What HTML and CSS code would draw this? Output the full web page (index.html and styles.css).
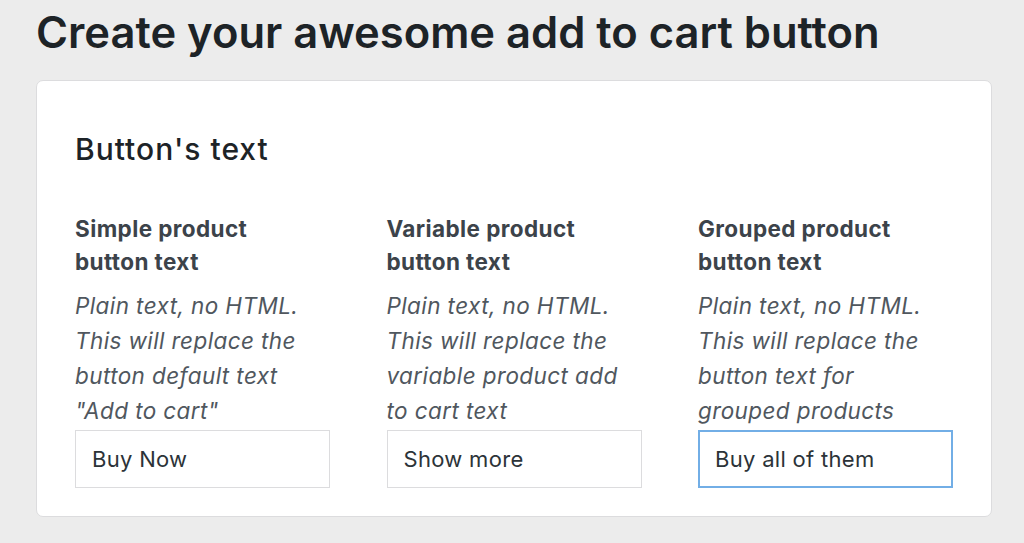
FILE: index.html
```html
<!DOCTYPE html>
<html lang="en">
<head>
  <meta charset="UTF-8">
  <title>Add to cart button</title>
  <link rel="stylesheet" href="styles.css">
</head>
<body>
  <h1 class="page-title">Create your awesome add to cart button</h1>

  <div class="card">
    <h2 class="card-title">Button's text</h2>

    <div class="fields">
      <div class="field">
        <label class="field-label" for="simple">Simple product button text</label>
        <p class="field-desc">Plain text, no HTML. This will replace the button default text "Add to cart"</p>
        <input type="text" id="simple" class="field-input" value="Buy Now">
      </div>
      <div class="field">
        <label class="field-label" for="variable">Variable product button text</label>
        <p class="field-desc">Plain text, no HTML. This will replace the variable product add to cart text</p>
        <input type="text" id="variable" class="field-input" value="Show more">
      </div>
      <div class="field">
        <label class="field-label" for="grouped">Grouped product button text</label>
        <p class="field-desc">Plain text, no HTML. This will replace the button text for grouped products</p>
        <input type="text" id="grouped" class="field-input is-focus" value="Buy all of them">
      </div>
    </div>
  </div>
</body>
</html>
```

FILE: styles.css
```css
body {
  margin: 0;
  padding: 0 32px 0 36px;
  background-color: #ececec;
  font-family: Inter, "Noto Sans", sans-serif;
  color: #1d2327;
}
.page-title {
  margin: 0;
  padding-top: 4px;
  font-size: 43.5px;
  font-weight: 600;
  line-height: 56px;
}
.card {
  margin-top: 20px;
  background: #fff;
  border: 1px solid #dcdcde;
  border-radius: 7px;
  padding: 48px 38px 28px 38px;
}
.card-title {
  margin: 0;
  font-size: 30px;
  font-weight: 500;
  line-height: 40px;
  letter-spacing: 1px;
}
.fields {
  display: grid;
  grid-template-columns: repeat(3, 255px);
  column-gap: 56.5px;
  margin-top: 43px;
}
.field-label {
  display: block;
  max-width: 240px;
  font-size: 22.5px;
  font-weight: 700;
  line-height: 33px;
  letter-spacing: 0.4px;
  color: #3c434a;
}
.field-desc {
  max-width: 238px;
  margin: 10px 0 0;
  font-size: 22.5px;
  font-style: italic;
  line-height: 35px;
  letter-spacing: 0.4px;
  color: #50575e;
}
.field-input {
  display: block;
  box-sizing: border-box;
  width: 255px;
  height: 58px;
  margin-top: 2px;
  padding: 0 16px;
  border: 1px solid #dcdcde;
  border-radius: 0;
  font-family: Inter, "Noto Sans", sans-serif;
  font-size: 22px;
  letter-spacing: 0.3px;
  color: #2c3338;
  background: #fff;
}
.field-input.is-focus {
  border: 2px solid #72aee6;
  padding: 0 15px;
}
```
